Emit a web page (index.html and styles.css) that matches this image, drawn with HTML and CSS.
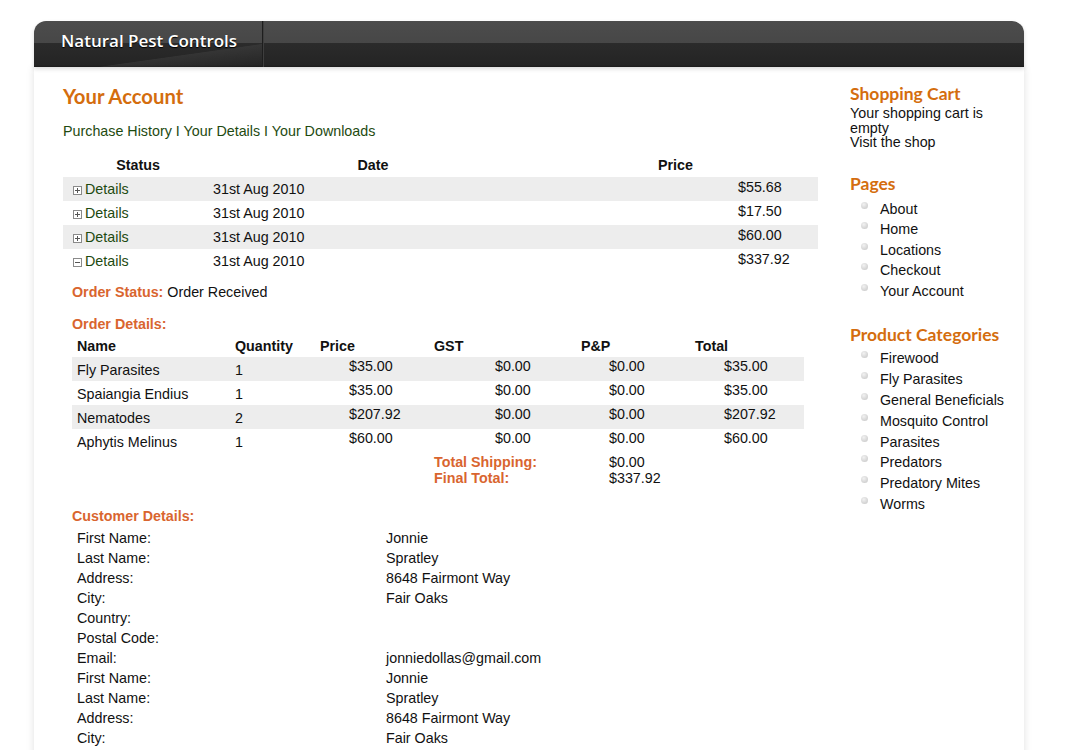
FILE: index.html
```html
<!DOCTYPE html>
<html>
<head>
<meta charset="utf-8">
<title>Your Account - Natural Pest Controls</title>
<link rel="stylesheet" href="styles.css">
</head>
<body>
<div class="site">
  <header class="masthead">
    <div class="brand">Natural Pest Controls</div>
    <div class="masthead-rest"></div>
  </header>
  <div class="body">
    <main class="main">
      <h1 class="page-title">Your Account</h1>
      <nav class="account-nav"><a href="#">Purchase History</a> I <a href="#">Your Details</a> I <a href="#">Your Downloads</a></nav>

      <table class="history">
        <thead>
          <tr><th class="c-status">Status</th><th class="c-date">Date</th><th class="c-price">Price</th></tr>
        </thead>
        <tbody>
          <tr class="alt"><td class="c-status"><span class="tog"><svg width="9" height="9" viewBox="0 0 9 9"><rect x="0.5" y="0.5" width="8" height="8" fill="#fff" stroke="#8a8a8a"/><path d="M2 4.5h5M4.5 2v5" stroke="#555" stroke-width="1"/></svg></span><a href="#">Details</a></td><td class="c-date">31st Aug 2010</td><td class="c-price">$55.68</td></tr>
          <tr><td class="c-status"><span class="tog"><svg width="9" height="9" viewBox="0 0 9 9"><rect x="0.5" y="0.5" width="8" height="8" fill="#fff" stroke="#8a8a8a"/><path d="M2 4.5h5M4.5 2v5" stroke="#555" stroke-width="1"/></svg></span><a href="#">Details</a></td><td class="c-date">31st Aug 2010</td><td class="c-price">$17.50</td></tr>
          <tr class="alt"><td class="c-status"><span class="tog"><svg width="9" height="9" viewBox="0 0 9 9"><rect x="0.5" y="0.5" width="8" height="8" fill="#fff" stroke="#8a8a8a"/><path d="M2 4.5h5M4.5 2v5" stroke="#555" stroke-width="1"/></svg></span><a href="#">Details</a></td><td class="c-date">31st Aug 2010</td><td class="c-price">$60.00</td></tr>
          <tr><td class="c-status"><span class="tog"><svg width="9" height="9" viewBox="0 0 9 9"><rect x="0.5" y="0.5" width="8" height="8" fill="#fff" stroke="#8a8a8a"/><path d="M2 4.5h5" stroke="#555" stroke-width="1"/></svg></span><a href="#">Details</a></td><td class="c-date">31st Aug 2010</td><td class="c-price">$337.92</td></tr>
        </tbody>
      </table>

      <section class="order">
        <p class="status-line"><span class="lbl">Order Status:</span> Order Received</p>
        <h3 class="lbl section-lbl">Order Details:</h3>
        <table class="items">
          <thead>
            <tr><th class="i-name">Name</th><th class="i-qty">Quantity</th><th class="i-price">Price</th><th class="i-gst">GST</th><th class="i-pp">P&amp;P</th><th class="i-total">Total</th></tr>
          </thead>
          <tbody>
            <tr class="alt"><td class="i-name">Fly Parasites</td><td class="i-qty">1</td><td class="i-price">$35.00</td><td class="i-gst">$0.00</td><td class="i-pp">$0.00</td><td class="i-total">$35.00</td></tr>
            <tr><td class="i-name">Spaiangia Endius</td><td class="i-qty">1</td><td class="i-price">$35.00</td><td class="i-gst">$0.00</td><td class="i-pp">$0.00</td><td class="i-total">$35.00</td></tr>
            <tr class="alt"><td class="i-name">Nematodes</td><td class="i-qty">2</td><td class="i-price">$207.92</td><td class="i-gst">$0.00</td><td class="i-pp">$0.00</td><td class="i-total">$207.92</td></tr>
            <tr><td class="i-name">Aphytis Melinus</td><td class="i-qty">1</td><td class="i-price">$60.00</td><td class="i-gst">$0.00</td><td class="i-pp">$0.00</td><td class="i-total">$60.00</td></tr>
          </tbody>
        </table>
        <div class="totals">
          <div class="t-row"><span class="lbl t-lbl">Total Shipping:</span><span class="t-val">$0.00</span></div>
          <div class="t-row"><span class="lbl t-lbl">Final Total:</span><span class="t-val">$337.92</span></div>
        </div>

        <h3 class="lbl section-lbl cust-lbl">Customer Details:</h3>
        <dl class="customer">
          <div class="c-row"><dt>First Name:</dt><dd>Jonnie</dd></div>
          <div class="c-row"><dt>Last Name:</dt><dd>Spratley</dd></div>
          <div class="c-row"><dt>Address:</dt><dd>8648 Fairmont Way</dd></div>
          <div class="c-row"><dt>City:</dt><dd>Fair Oaks</dd></div>
          <div class="c-row"><dt>Country:</dt><dd></dd></div>
          <div class="c-row"><dt>Postal Code:</dt><dd></dd></div>
          <div class="c-row"><dt>Email:</dt><dd>jonniedollas@gmail.com</dd></div>
          <div class="c-row"><dt>First Name:</dt><dd>Jonnie</dd></div>
          <div class="c-row"><dt>Last Name:</dt><dd>Spratley</dd></div>
          <div class="c-row"><dt>Address:</dt><dd>8648 Fairmont Way</dd></div>
          <div class="c-row"><dt>City:</dt><dd>Fair Oaks</dd></div>
        </dl>
      </section>
    </main>

    <aside class="sidebar">
      <div class="widget">
        <h2 class="w-title">Shopping Cart</h2>
        <p class="cart-text">Your shopping cart is empty<br>Visit the shop</p>
      </div>
      <div class="widget">
        <h2 class="w-title">Pages</h2>
        <ul class="w-list pages">
          <li>About</li>
          <li>Home</li>
          <li>Locations</li>
          <li>Checkout</li>
          <li>Your Account</li>
        </ul>
      </div>
      <div class="widget">
        <h2 class="w-title">Product Categories</h2>
        <ul class="w-list cats">
          <li>Firewood</li>
          <li>Fly Parasites</li>
          <li>General Beneficials</li>
          <li>Mosquito Control</li>
          <li>Parasites</li>
          <li>Predators</li>
          <li>Predatory Mites</li>
          <li>Worms</li>
        </ul>
      </div>
    </aside>
  </div>
</div>
</body>
</html>
```

FILE: styles.css
```css
html, body {
  margin: 0;
  padding: 0;
  background: #fff;
}
body {
  font-family: "Liberation Sans", Arial, sans-serif;
  font-size: 14.3px;
  color: #111;
}
.site {
  width: 990px;
  margin: 21px 0 0 34px;
}
.masthead {
  display: flex;
  height: 46px;
  border-radius: 12px 12px 0 0;
  overflow: hidden;
  background: linear-gradient(to bottom, #4c4c4c 0, #474747 22px, #2b2b2b 22px, #242424 44px, #1a1a1a 46px);
  box-shadow: 0 2px 4px rgba(0,0,0,0.15);
  position: relative;
  z-index: 1;
}
.brand {
  width: 229px;
  border-right: 1px solid #1e1e1e;
  box-shadow: 1px 0 0 #3e3e3e;
  padding-left: 27px;
  box-sizing: border-box;
  font-family: "Open Sans", "DejaVu Sans", sans-serif;
  font-weight: 600;
  font-size: 17px;
  line-height: 40px;
  color: #fff;
  text-shadow: 0 1px 1px #000;
  background: linear-gradient(172deg, rgba(255,255,255,0) 70%, rgba(255,255,255,0.06) 71%, rgba(255,255,255,0) 100%);
}
.masthead-rest {
  flex: 1;
}
.body {
  display: flex;
  box-shadow: 0 0 8px rgba(0,0,0,0.12);
  min-height: 700px;
}
.main {
  width: 755px;
  padding: 17px 0 0 29px;
}
.page-title {
  margin: 0;
  font-family: Lato, "Open Sans", sans-serif;
  font-weight: 700;
  font-size: 20.3px;
  line-height: 24px;
  color: #d46d0e;
}
.account-nav {
  margin-top: 14px;
  line-height: 18px;
  color: #1e4a10;
}
.account-nav a {
  color: #1e4a10;
  text-decoration: none;
}
.history, .items {
  border-collapse: collapse;
  table-layout: fixed;
  line-height: 18px;
}
.history th, .history td, .items th, .items td {
  box-sizing: border-box;
}
.history {
  margin-top: 14px;
  width: 755px;
}
.history th {
  height: 23px;
  padding: 0 0 1px;
  font-weight: bold;
  text-align: center;
  vertical-align: middle;
}
.history td {
  height: 24px;
  padding: 0;
  vertical-align: middle;
}
.history .c-status { width: 150px; }
.history .c-date { width: 320px; }
.history .c-price { width: 285px; }
.history td.c-status { padding-left: 10px; }
.history td.c-price {
  padding-left: 205px;
  vertical-align: top;
  padding-top: 1px;
}
.history tr.alt td, .items tr.alt td {
  background: #ededed;
}
.tog {
  display: inline-block;
  width: 9px;
  height: 9px;
  margin-right: 3px;
  vertical-align: -1px;
}
.tog svg { display: block; }
.history td a {
  color: #1e4a10;
  text-decoration: none;
}
.order {
  padding-left: 9px;
}
.status-line {
  margin: 10px 0 0;
  line-height: 18px;
}
.lbl {
  color: #d9652f;
  font-weight: bold;
}
.section-lbl {
  margin: 14px 0 0;
  font-size: 14.3px;
  line-height: 18px;
}
.items {
  margin-top: 0;
  width: 732px;
}
.items th {
  height: 24px;
  padding: 4px 0 0 5px;
  text-align: left;
  font-weight: bold;
  vertical-align: top;
}
.items td {
  height: 24px;
  padding: 0;
  vertical-align: middle;
}
.items .i-name { width: 158px; }
.items .i-qty { width: 85px; }
.items .i-price { width: 114px; }
.items .i-gst { width: 147px; }
.items .i-pp { width: 114px; }
.items .i-total { width: 114px; }
.items td.i-name, .items td.i-qty { padding-left: 5px; padding-top: 2px; }
.items td.i-price, .items td.i-gst, .items td.i-pp, .items td.i-total {
  vertical-align: top;
  padding-top: 0;
}
.items td.i-price { padding-left: 34px; }
.items td.i-gst { padding-left: 66px; }
.items td.i-pp { padding-left: 33px; }
.items td.i-total { padding-left: 34px; }
.totals {
  margin-top: 1px;
  padding-left: 362px;
}
.t-row {
  display: flex;
  line-height: 16px;
}
.t-lbl {
  width: 175px;
}
.cust-lbl {
  margin-top: 21px;
}
.customer {
  margin: 3px 0 0;
}
.c-row {
  display: flex;
  line-height: 20px;
}
.c-row dt {
  width: 309px;
  padding-left: 5px;
}
.c-row dd {
  margin: 0;
}
.sidebar {
  margin-left: 32px;
  width: 165px;
  padding-top: 17px;
}
.widget {
  margin-bottom: 24px;
}
.w-title {
  margin: 0;
  font-family: Lato, "Open Sans", sans-serif;
  font-weight: 700;
  font-size: 17.5px;
  line-height: 20px;
  color: #d46d0e;
}
.cart-text {
  margin: 2px 0 0;
  line-height: 14.5px;
}
.w-list {
  list-style: none;
  margin: 0;
  padding: 0;
}
.w-list.pages {
  margin-top: 5px;
}
.w-list.cats {
  margin-top: 3px;
}
.w-list li {
  position: relative;
  padding-left: 30px;
  line-height: 20.6px;
}
.w-list li::before {
  content: "";
  position: absolute;
  left: 11px;
  top: 3px;
  width: 7px;
  height: 7px;
  border-radius: 50%;
  background: radial-gradient(circle at 40% 35%, #f2f2f2 0, #d6d6d6 60%, #c4c4c4 100%);
}
.w-list.cats li {
  line-height: 20.8px;
}
```
